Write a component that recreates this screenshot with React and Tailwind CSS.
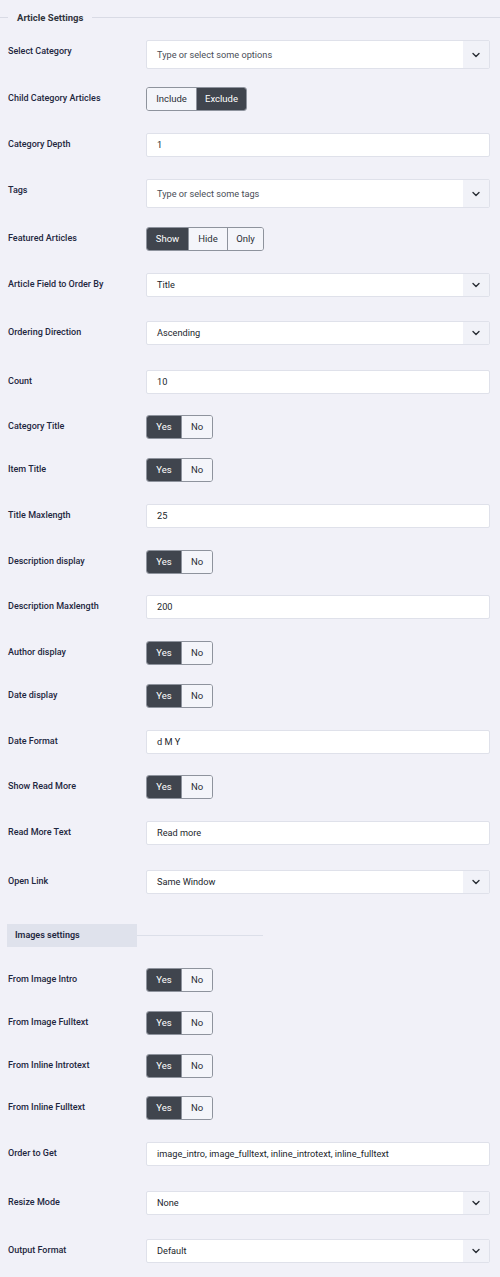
import React from 'react';

const font = { fontFamily: 'Roboto, "Noto Sans", sans-serif' };

const Chevron = () => (
    <svg width="10" height="10" viewBox="0 0 10 10" fill="none">
        <path d="M2 3.5 L5 6.5 L8 3.5" stroke="#2a2e36" strokeWidth="1.4" strokeLinecap="round" strokeLinejoin="round" />
    </svg>
);

const TextInput = ({ value, tall }) => (
    <div className={`flex-1 flex items-center bg-white border border-[#dfe1ea] rounded-[2px] pl-[10px] text-[9.2px] text-[#22262c] ${tall ? 'h-[29px]' : 'h-[24px]'}`}>
        {value}
    </div>
);

const SelectBox = ({ value, placeholder, tall }) => (
    <div className={`flex-1 flex items-stretch bg-white border border-[#dfe1ea] rounded-[2px] ${tall ? 'h-[29px]' : 'h-[24px]'}`}>
        <div className={`flex-1 flex items-center pl-[10px] text-[9.2px] ${placeholder ? 'text-[#4a4e57]' : 'text-[#22262c]'}`}>
            {value || placeholder}
        </div>
        <div className="w-[26px] flex items-center justify-center bg-[#f1f2f8]">
            <Chevron />
        </div>
    </div>
);

const Toggle = ({ options, active }) => (
    <div className="flex h-[24px] border border-[#8e939d] rounded-[3px] overflow-hidden">
        {options.map(([label, w], i) => (
            <div
                key={label}
                className={`flex items-center justify-center text-[9.5px] ${w} ${i > 0 ? 'border-l border-[#8e939d]' : ''} ${i === active ? 'bg-[#40454e] text-white' : 'bg-[#f4f5fa] text-[#2a2e36]'}`}
            >
                {label}
            </div>
        ))}
    </div>
);

const yesNo = [['Yes', 'w-[34px]'], ['No', 'w-[31px]']];

const Row = ({ label, gap, children }) => (
    <div className={`flex items-start pl-[8px] pr-[10px] ${gap}`}>
        <div className="w-[138px] pt-[4px] text-[9px] leading-[14px] font-medium text-[#1e2740]">{label}</div>
        <div className="flex-1 flex">{children}</div>
    </div>
);

const articleRows = [
    { label: 'Select Category', gap: 'mt-0', el: <SelectBox placeholder="Type or select some options" tall /> },
    { label: 'Child Category Articles', gap: 'mt-[18px]', el: <Toggle options={[['Include', 'w-[49px]'], ['Exclude', 'w-[50px]']]} active={1} /> },
    { label: 'Category Depth', gap: 'mt-[22px]', el: <TextInput value="1" /> },
    { label: 'Tags', gap: 'mt-[22px]', el: <SelectBox placeholder="Type or select some tags" tall /> },
    { label: 'Featured Articles', gap: 'mt-[19px]', el: <Toggle options={[['Show', 'w-[41px]'], ['Hide', 'w-[39px]'], ['Only', 'w-[36px]']]} active={0} /> },
    { label: 'Article Field to Order By', gap: 'mt-[22px]', el: <SelectBox value="Title" /> },
    { label: 'Ordering Direction', gap: 'mt-[24px]', el: <SelectBox value="Ascending" /> },
    { label: 'Count', gap: 'mt-[25px]', el: <TextInput value="10" /> },
    { label: 'Category Title', gap: 'mt-[21px]', el: <Toggle options={yesNo} active={0} /> },
    { label: 'Item Title', gap: 'mt-[19px]', el: <Toggle options={yesNo} active={0} /> },
    { label: 'Title Maxlength', gap: 'mt-[22px]', el: <TextInput value="25" /> },
    { label: 'Description display', gap: 'mt-[22px]', el: <Toggle options={yesNo} active={0} /> },
    { label: 'Description Maxlength', gap: 'mt-[21px]', el: <TextInput value="200" /> },
    { label: 'Author display', gap: 'mt-[22px]', el: <Toggle options={yesNo} active={0} /> },
    { label: 'Date display', gap: 'mt-[19px]', el: <Toggle options={yesNo} active={0} /> },
    { label: 'Date Format', gap: 'mt-[22px]', el: <TextInput value="d M Y" /> },
    { label: 'Show Read More', gap: 'mt-[21px]', el: <Toggle options={yesNo} active={0} /> },
    { label: 'Read More Text', gap: 'mt-[22px]', el: <TextInput value="Read more" /> },
    { label: 'Open Link', gap: 'mt-[25px]', el: <SelectBox value="Same Window" /> },
];

const imageRows = [
    { label: 'From Image Intro', gap: 'mt-0', el: <Toggle options={yesNo} active={0} /> },
    { label: 'From Image Fulltext', gap: 'mt-[19px]', el: <Toggle options={yesNo} active={0} /> },
    { label: 'From Inline Introtext', gap: 'mt-[19px]', el: <Toggle options={yesNo} active={0} /> },
    { label: 'From Inline Fulltext', gap: 'mt-[18px]', el: <Toggle options={yesNo} active={0} /> },
    { label: 'Order to Get', gap: 'mt-[22px]', el: <TextInput value="image_intro, image_fulltext, inline_introtext, inline_fulltext" /> },
    { label: 'Resize Mode', gap: 'mt-[25px]', el: <SelectBox value="None" /> },
    { label: 'Output Format', gap: 'mt-[24px]', el: <SelectBox value="Default" /> },
];

export default function App() {
    return (
        <div className="w-[500px] min-h-[1277px] bg-[#f1f1f8] pt-[11px]" style={font}>
            {/* fieldset legend */}
            <div className="flex items-center h-[13px]">
                <div className="w-[8px] h-px bg-[#d9dbe5]" />
                <div className="px-[9px] text-[9.5px] font-bold text-[#30343c] leading-[13px]">Article Settings</div>
                <div className="flex-1 h-px bg-[#d9dbe5]" />
            </div>

            <div className="mt-[16px]">
                {articleRows.map((r) => (
                    <Row key={r.label} label={r.label} gap={r.gap}>{r.el}</Row>
                ))}
            </div>

            <div className="flex items-center mt-[30px] pl-[7px]">
                <div className="w-[130px] h-[23px] bg-[#dfe2ec] flex items-center pl-[8px] text-[9px] font-semibold text-[#1e2740]">
                    Images settings
                </div>
                <div className="w-[126px] h-px bg-[#dcdfe9]" />
            </div>

            <div className="mt-[21px] pb-[10px]">
                {imageRows.map((r) => (
                    <Row key={r.label} label={r.label} gap={r.gap}>{r.el}</Row>
                ))}
            </div>
        </div>
    );
}
